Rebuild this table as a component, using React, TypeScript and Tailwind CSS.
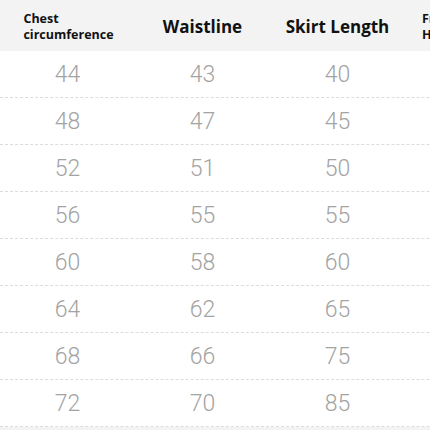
import React from 'react';

const rows = [
    [44, 43, 40],
    [48, 47, 45],
    [52, 51, 50],
    [56, 55, 55],
    [60, 58, 60],
    [64, 62, 65],
    [68, 66, 75],
    [72, 70, 85],
];

const App = () => {
    return (
        <div className="w-[430px] h-[430px] overflow-hidden bg-white" style={{ fontFamily: '"Open Sans", "Noto Sans", sans-serif' }}>
            <div className="w-[560px]">
                {/* header band */}
                <div className="grid grid-cols-[135px_135px_135px_155px] h-[51px] pt-[3px] bg-[#f3f3f3] text-[#111] items-center">
                    <div className="flex justify-center">
                        <div className="text-[12.5px] font-bold leading-[16px] pl-[2px]">
                            <div>Chest</div>
                            <div>circumference</div>
                        </div>
                    </div>
                    <div className="text-center text-[17px] font-bold">Waistline</div>
                    <div className="text-center text-[17px] font-bold">Skirt Length</div>
                    <div className="pl-[17px] text-[12.5px] font-bold leading-[16px]">
                        <div>Front Length</div>
                        <div>Hem Width</div>
                    </div>
                </div>

                {rows.map((row, i) => (
                    <div
                        key={i}
                        className="grid grid-cols-[135px_135px_135px_155px] h-[47px] pt-[2px] items-center border-b border-dashed border-[#dcdcdc] text-[#a3a3a3] text-[23px] font-light"
                        style={{ fontFamily: 'Roboto, "Liberation Sans", sans-serif' }}
                    >
                        {row.map((v, j) => (
                            <div key={j} className="text-center">{v}</div>
                        ))}
                        <div />
                    </div>
                ))}
                <div className="h-[10px] bg-[#f3f3f3]" />
            </div>
        </div>
    );
};

export default App;
